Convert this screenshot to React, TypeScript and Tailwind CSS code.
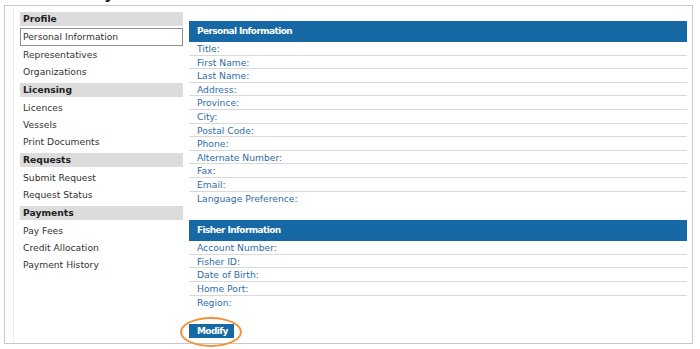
import React from "react";

const personal = [
  "Title:",
  "First Name:",
  "Last Name:",
  "Address:",
  "Province:",
  "City:",
  "Postal Code:",
  "Phone:",
  "Alternate Number:",
  "Fax:",
  "Email:",
  "Language Preference:",
];

const fisher = ["Account Number:", "Fisher ID:", "Date of Birth:", "Home Port:", "Region:"];

type Section = { title: string; items: string[] };
const sections: Section[] = [
  { title: "Profile", items: ["Personal Information", "Representatives", "Organizations"] },
  { title: "Licensing", items: ["Licences", "Vessels", "Print Documents"] },
  { title: "Requests", items: ["Submit Request", "Request Status"] },
  { title: "Payments", items: ["Pay Fees", "Credit Allocation", "Payment History"] },
];

function InfoBlock({ title, rows }: { title: string; rows: string[] }) {
  return (
    <div>
      <div className="h-[21px] bg-[#1769a5] pl-[8px] text-[9px] font-bold leading-[21px] tracking-[-0.6px] text-white">
        {title}
      </div>
      {rows.map((r, i) => (
        <div
          key={r}
          className={
            i < rows.length - 1
              ? "h-[13.6px] border-b border-[#d9d9d9] pl-[8px] pt-[1px] text-[9.2px] leading-[12px] text-[#2f6da8]"
              : "h-[13.6px] pl-[8px] pt-[1px] text-[9.2px] leading-[12px] text-[#2f6da8]"
          }
        >
          {r}
        </div>
      ))}
    </div>
  );
}

export default function App() {
  return (
    <div className="relative h-[349px] w-[700px] overflow-hidden bg-white font-['DejaVu_Sans',sans-serif]">
      <div className="h-[5px] overflow-hidden">
        <div className="mt-[-16px] pl-[88px] text-[16px] font-bold leading-[20px] text-[#222]">My Account</div>
      </div>
      <div className="ml-[4px] flex h-[339px] w-[689px] border border-[#c8c8c8]">
        <div className="ml-[8px] w-px bg-[#ececec]" />
        <div className="ml-[6px] w-[163px] pt-[6px]">
          {sections.map((s, si) => (
            <div key={s.title} className={si === 0 ? "" : "mt-[3px]"}>
              <div className="h-[14px] bg-[#dcdcdc] pl-[3px] text-[9.2px] font-bold leading-[14px] text-[#222]">
                {s.title}
              </div>
              <div className="mt-[2px]">
                {s.items.map((it) =>
                  it === "Personal Information" ? (
                    <div
                      key={it}
                      className="h-[18px] border border-[#8f8f8f] bg-white pl-[2px] text-[9.2px] leading-[16px] text-[#333]"
                    >
                      {it}
                    </div>
                  ) : (
                    <div key={it} className="h-[17px] pl-[3px] text-[9.2px] leading-[17px] text-[#333]">
                      {it}
                    </div>
                  )
                )}
              </div>
            </div>
          ))}
        </div>
        <div className="ml-[6px] w-[498px] pt-[15px]">
          <InfoBlock title="Personal Information" rows={personal} />
          <div className="mt-[15px]">
            <InfoBlock title="Fisher Information" rows={fisher} />
          </div>
          <div className="relative mt-[15px] w-fit">
            <button className="block h-[14px] bg-[#1769a5] pl-[8px] pr-[6px] text-[9px] font-bold leading-[14px] tracking-[-0.6px] text-white">
              Modify
            </button>
            <div className="absolute left-[-9px] top-[-7px] h-[30px] w-[62px] rounded-[50%] border-[2.5px] border-[#f29139]" />
          </div>
        </div>
      </div>
    </div>
  );
}
